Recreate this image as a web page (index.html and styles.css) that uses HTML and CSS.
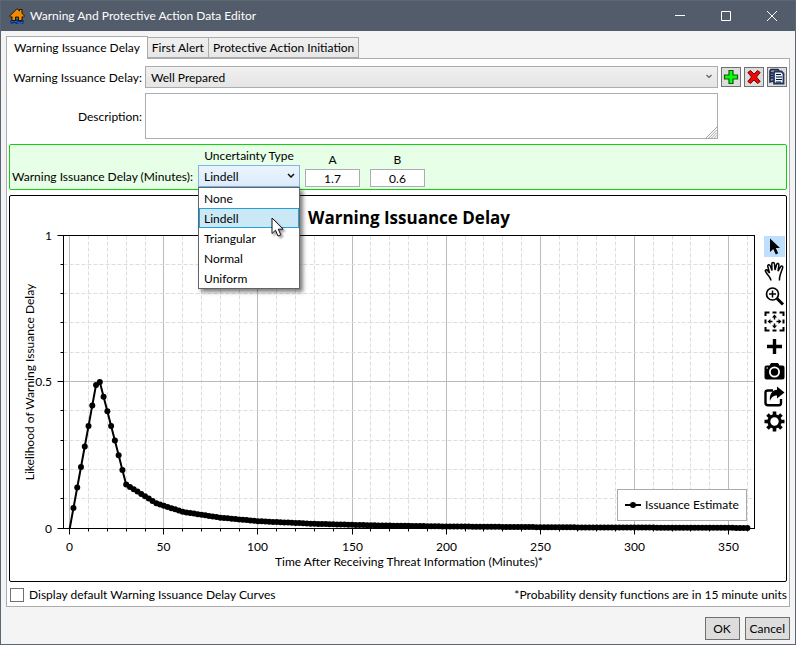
FILE: index.html
```html
<!DOCTYPE html>
<html lang="en">
<head>
<meta charset="utf-8">
<title>Warning And Protective Action Data Editor</title>
<link rel="stylesheet" href="styles.css">
</head>
<body>
<div class="window">
  <header class="titlebar">
    <svg class="app-icon" viewBox="0 0 16 16" aria-hidden="true">
      <path d="M1 13 L4 11.500 L13 11.500 L15 13 L14 16 L11 15 L8 16 L5 15 L2 16 Z" fill="#0a2f7a"/>
      <path d="M2 14 Q5 12 8 14 T14 14" stroke="#1668d8" fill="none"/>
      <path d="M8 .7 L10.500 3 V1.500 H13 V5.300 L15.500 8 L14 9.500 L13 8.700 V12.500 H9.500 V9 H6.500 V12.500 H3 V8.700 L2 9.500 L.7 8 Z" fill="#f28a00" stroke="#1c1308" stroke-width="1"/>
    </svg>
    <h1 class="title">Warning And Protective Action Data Editor</h1>
    <div class="caption-buttons">
      <button type="button" aria-label="Minimize"><svg viewBox="0 0 12 12"><path d="M1 5.500H11"/></svg></button>
      <button type="button" aria-label="Maximize"><svg viewBox="0 0 12 12"><path d="M1.500 1.500H10.500V10.500H1.500Z"/></svg></button>
      <button type="button" aria-label="Close"><svg viewBox="0 0 12 12"><path d="M1 1L11 11M11 1L1 11"/></svg></button>
    </div>
  </header>

  <main class="content">
    <div class="tabs" role="tablist">
      <button class="tab tab-active" type="button" role="tab" aria-selected="true">Warning Issuance Delay</button>
      <button class="tab" type="button" role="tab" aria-selected="false">First Alert</button>
      <button class="tab" type="button" role="tab" aria-selected="false">Protective Action Initiation</button>
    </div>

    <section class="panel" role="tabpanel">
      <div class="form">
        <label for="delay">Warning Issuance Delay:</label>
        <div class="combo">
          <select id="delay" class="combo-select"><option>Well Prepared</option></select>
          <svg class="chevron chevron-soft" viewBox="0 0 8 5" aria-hidden="true"><path d="M1.500 1L4 3.500L6.500 1"/></svg>
        </div>
        <div class="actions">
          <button class="icon-button" type="button" aria-label="Add"><svg viewBox="0 0 18 18"><path d="M7 2.500H11V7H15.500V11H11V15.500H7V11H2.500V7H7Z" fill="#0aff0a" stroke="#0b5c0b" stroke-width="1.200"/></svg></button>
          <button class="icon-button" type="button" aria-label="Delete"><svg viewBox="0 0 18 18"><path d="M5.500 2.500L9 6L12.500 2.500L15.200 4.500L11.500 9L15.200 13.500L12.500 15.500L9 12L5.500 15.500L2.800 13.500L6.500 9L2.800 4.500Z" fill="#f40505" stroke="#6d0808"/></svg></button>
          <button class="icon-button" type="button" aria-label="Copy"><svg viewBox="0 0 18 18"><path d="M3 1.500H10L11 3V13H5L2 14V3Z" fill="#8c9bb8" stroke="#1c2948" stroke-width="1.600"/><path d="M2.500 5H5M2.500 7.500H5M2.500 10H5" stroke="#111a30" stroke-width="1.300"/><path d="M7 3.500H13.500L15.500 5.500V15.500H6V4.500Z" fill="#e9f0ff" stroke="#23365f" stroke-width="1.800"/><path d="M8 6.500H13M8 9H14M8 11.500H14M8 14H13" stroke="#0d1222" stroke-width="1.200"/></svg></button>
        </div>
        <label for="description">Description:</label>
        <div class="description">
          <textarea id="description"></textarea>
          <svg class="grip" viewBox="0 0 12 12" aria-hidden="true"><path d="M0 12L12 0M3 12L12 3M6 12L12 6M9 12L12 9"/></svg>
        </div>
      </div>

      <div class="uncertainty">
        <label class="uncertainty-label" for="type">Warning Issuance Delay (Minutes):</label>
        <div class="type-field">
          <span class="column-title">Uncertainty Type</span>
          <div class="combo combo-open">
            <select id="type" class="combo-select">
              <option>None</option>
              <option selected>Lindell</option>
              <option>Triangular</option>
              <option>Normal</option>
              <option>Uniform</option>
            </select>
            <svg class="chevron" viewBox="0 0 8 5" aria-hidden="true"><path d="M1 1L4 4L7 1"/></svg>
            <ul class="menu" role="listbox" aria-label="Uncertainty Type">
              <li role="option">None</li>
              <li role="option" class="menu-selected" aria-selected="true">Lindell</li>
              <li role="option">Triangular</li>
              <li role="option">Normal</li>
              <li role="option">Uniform</li>
            </ul>
            <svg class="pointer" viewBox="0 0 14 20" aria-hidden="true"><path d="M1 1V16.500L4.500 13.200L7 19L9.800 17.800L7.300 12.200H12Z"/></svg>
          </div>
        </div>
        <div class="number-field">
          <label for="a">A</label>
          <input id="a" type="text" value="1.7">
        </div>
        <div class="number-field">
          <label for="b">B</label>
          <input id="b" type="text" value="0.6">
        </div>
      </div>

      <div class="plot">
        <svg id="chart" class="chart" viewBox="10 196 750 385" role="img" aria-label="Warning Issuance Delay"></svg>
        <div class="tools">
          <button class="tool tool-active" type="button" aria-label="Select"><svg viewBox="0 0 21 21"><path d="M6 2.500V16L9.300 13L11.800 18.500L14.200 17.300L11.800 12H16Z" fill="#000"/></svg></button>
          <button class="tool" type="button" aria-label="Pan"><svg viewBox="0 0 21 21"><path d="M7 19.500C6.500 16.500 5 15.500 3.500 13.500L1.500 10.500C.8 9 2.600 8.300 3.600 9.500L5.500 12L3.800 5.500C3.300 3.500 5.500 3 6.200 4.800L8 9.500L7.800 3C7.800 1 10.300 1 10.500 3L11 9L12.600 3.500C13.200 1.600 15.200 2.300 14.900 4.200L14 10L16.500 5.800C17.500 4.300 19.300 5.300 18.600 7L16.500 13C15.800 15.500 15 17 15.500 19.500" fill="none" stroke="#000" stroke-width="1.500"/></svg></button>
          <button class="tool" type="button" aria-label="Zoom"><svg viewBox="0 0 21 21"><circle cx="8.500" cy="8" r="6" fill="none" stroke="#000" stroke-width="1.700"/><path d="M8.500 4.500V11.500M5 8H12" stroke="#000" stroke-width="1.500"/><path d="M13 12.500L19 18.500" stroke="#000" stroke-width="3"/></svg></button>
          <button class="tool" type="button" aria-label="Zoom to fit"><svg viewBox="0 0 21 21"><path d="M1.500 5V1.500H5.500M8.500 1.500H12.500M15.500 1.500H19.500V5M19.500 8.500V12.500M19.500 16V19.500H15.500M12.500 19.500H8.500M5.500 19.500H1.500V16M1.500 12.500V8.500" fill="none" stroke="#000" stroke-width="2"/><path d="M10.500 5V8.500M10.500 12.500V16M5 10.500H8.500M12.500 10.500H16" stroke="#000" stroke-width="1.500"/><path d="M10.500 3.500L13 6.500H8ZM10.500 17.500L8 14.500H13ZM3.500 10.500L6.500 8V13ZM17.500 10.500L14.500 13V8Z"/></svg></button>
          <button class="tool" type="button" aria-label="Add"><svg viewBox="0 0 21 21"><path d="M10.500 3V18M3 10.500H18" stroke="#000" stroke-width="3.400"/></svg></button>
          <button class="tool" type="button" aria-label="Snapshot"><svg viewBox="0 0 21 21"><path d="M.5 6.500Q.5 4.500 2.500 4.500H5.500L7 2H14L15.500 4.500H18.500Q20.500 4.500 20.500 6.500V16.500Q20.500 18.500 18.500 18.500H2.500Q.5 18.500 .5 16.500Z"/><circle cx="10.500" cy="11" r="4.600" fill="#000" stroke="#fff" stroke-width="1.800"/><path d="M2.500 7H4" stroke="#fff" stroke-width="1.200"/></svg></button>
          <button class="tool" type="button" aria-label="Export"><svg viewBox="0 0 21 21"><path d="M9 4.500H4Q1.500 4.500 1.500 6.500V17Q1.500 19.200 4 19.200H15Q17 19.200 17 17V13" fill="none" stroke="#000" stroke-width="2.400"/><path d="M13 .5L20.500 6.500L13 12.500V9.500C9.500 9.500 7.500 11 6 15C5 9 8 4 13 3.700Z"/></svg></button>
          <button class="tool" type="button" aria-label="Settings"><svg viewBox="0 0 21 21"><circle cx="10.500" cy="10.500" r="5.700" fill="none" stroke="#000" stroke-width="3"/><path d="M10.500 .5V4M10.500 17V20.500M.5 10.500H4M17 10.500H20.500M3.500 3.500L6 6M15 15L17.500 17.500M3.500 17.500L6 15M15 6L17.500 3.500" stroke="#000" stroke-width="3.600"/></svg></button>
        </div>
      </div>

      <div class="notes">
        <label class="check"><input type="checkbox"> Display default Warning Issuance Delay Curves</label>
        <span>*Probability density functions are in 15 minute units</span>
      </div>
    </section>

    <footer class="dialog-actions">
      <button class="push" type="button">OK</button>
      <button class="push" type="button">Cancel</button>
    </footer>
  </main>
</div>
<script src="chart.js"></script>
</body>
</html>
```
FILE: styles.css
```css
* { box-sizing: border-box; }

body {
  margin: 0;
  font: 12px/16px Lato, "Open Sans", sans-serif;
  color: #000;
}

button, input, select, textarea { font: inherit; color: inherit; border-radius: 0; }
svg { display: block; }

.window {
  min-height: 100vh;
  display: flex;
  flex-direction: column;
  border: 1px solid #5b6675;
  background: #f4f4f4;
}

.titlebar {
  display: flex;
  align-items: center;
  height: 30px;
  padding-left: 8px;
  background: #525c6a;
  color: #fff;
}
.app-icon { width: 16px; height: 16px; margin-right: 5px; }
.title { flex: 1; margin: 0; font-size: 12px; font-weight: 400; }
.caption-buttons { display: flex; }
.caption-buttons button {
  display: flex;
  align-items: center;
  justify-content: center;
  width: 46px;
  height: 30px;
  padding: 0;
  border: 0;
  background: none;
}
.caption-buttons svg { width: 12px; height: 12px; fill: none; stroke: #fff; }

.content { flex: 1; padding: 5px 5px 0; }

.tabs { display: flex; align-items: flex-end; position: relative; }
.tab {
  height: 21px;
  margin-left: -1px;
  padding: 1px 4px 0;
  border: 1px solid #acacac;
  background: linear-gradient(#f0f0f0, #e6e6e6);
  white-space: nowrap;
}
.tab-active {
  height: 23px;
  margin: 0 0 -1px;
  padding: 0 7px;
  border-bottom: 0;
  background: #fff;
}

.panel { border: 1px solid #acacac; background: #fff; padding: 7px 2px 2px; }

.form {
  display: grid;
  grid-template-columns: 133px 1fr auto;
  column-gap: 3px;
  row-gap: 5px;
  align-items: center;
}
.form > label { padding-top: 2px; text-align: right; white-space: nowrap; }
.actions { display: flex; gap: 3px; }
.icon-button {
  width: 20px;
  height: 20px;
  padding: 0;
  border: 1px solid #707070;
  background: #ddd;
}
.icon-button svg { width: 18px; height: 18px; }

.combo { position: relative; }
.combo-select {
  display: block;
  appearance: none;
  width: 100%;
  height: 22px;
  padding: 2px 5px 0;
  border: 1px solid #acacac;
  background: linear-gradient(#f0f0f0, #e5e5e5);
}
.combo-open .combo-select { border-color: #7eb4ea; background: linear-gradient(#ebf4fc, #dcecfc); }
.chevron {
  position: absolute;
  right: 5px;
  top: 8px;
  width: 8px;
  height: 5px;
  fill: none;
  stroke: #111;
  stroke-width: 1.500;
}
.chevron-soft { stroke: #606060; stroke-width: 1.200; }

.description { position: relative; }
.description textarea {
  display: block;
  width: 100%;
  height: 46px;
  border: 1px solid #abadb3;
  resize: none;
}
.grip { position: absolute; right: 1px; bottom: 1px; width: 11px; height: 11px; fill: none; stroke: #999; }

.uncertainty {
  display: flex;
  align-items: flex-end;
  height: 46px;
  margin-top: 5px;
  padding: 0 2px 2px;
  border: 1px solid #10d010;
  border-radius: 2px;
  background: #e6ffe6;
}
.uncertainty-label { width: 186px; padding-bottom: 2px; white-space: nowrap; }
.type-field { width: 102px; }
.column-title { display: block; margin-bottom: 1px; text-align: center; white-space: nowrap; }
.number-field { width: 55px; margin-left: 5px; text-align: center; }
.number-field + .number-field { margin-left: 10px; }
.number-field label { display: block; margin-bottom: 1px; }
.number-field input {
  display: block;
  width: 100%;
  height: 18px;
  padding: 0;
  border: 1px solid #abadb3;
  background: #fff;
  text-align: center;
}

.menu {
  position: absolute;
  z-index: 2;
  top: 22px;
  left: 0;
  right: 0;
  margin: 0;
  padding: 0;
  border: 1px solid #646464;
  background: #fff;
  box-shadow: 3px 3px 4px rgba(0, 0, 0, .5);
  list-style: none;
}
.menu li { height: 20px; padding: 2px 4px 0; border: 1px solid transparent; }
.menu .menu-selected { border-color: #26a0da; background: #cbe8f6; }
.pointer {
  position: absolute;
  z-index: 3;
  left: 73px;
  top: 52px;
  width: 14px;
  height: 20px;
  fill: #fff;
  stroke: #111;
  filter: drop-shadow(2px 2px 1px rgba(0, 0, 0, .4));
}

.plot {
  display: flex;
  margin-top: 5px;
  border: 1px solid #000;
  border-radius: 2px;
}
.chart { flex: 1; min-width: 0; }
.tools { display: flex; flex-direction: column; gap: 4px; margin: 40px 1px 0 4px; }
.tool { width: 21px; height: 21px; padding: 0; border: 0; background: none; }
.tool svg { width: 21px; height: 21px; }
.tool-active { background: #bfdfff; }

.frame, .tick, .curve { fill: none; stroke: #000; }
.curve { stroke-width: 2; }
.major { stroke: #bbb; }
.minor { stroke: #ddd; stroke-dasharray: 4 2; }
.legend-box { fill: #fff; stroke: #aaa; }
.axis-text { font-size: 12px; }
.axis-text-mid { text-anchor: middle; }
.axis-text-end { text-anchor: end; }
.chart-title { font-family: "Open Sans", sans-serif; font-size: 17px; font-weight: 700; text-anchor: middle; }

.notes { display: flex; justify-content: space-between; margin-top: 4px; height: 18px; align-items: center; }
.check { display: flex; align-items: center; gap: 5px; }
.check input {
  appearance: none;
  width: 14px;
  height: 14px;
  margin: 0 0 0 1px;
  border: 1px solid #707070;
  background: #fff;
}

.dialog-actions { display: flex; justify-content: flex-end; gap: 5px; margin-top: 10px; }
.push { height: 23px; min-width: 35px; padding: 0 4px; border: 1px solid #707070; background: #ddd; }
```
FILE: chart.js
```js
const svg = document.getElementById('chart');
const left = 63.5, right = 754.5, top0 = 235.5, bottom = 528.5;
const px = t => 69.7 + t * 1.8825;
const py = v => bottom - v * (bottom - top0);
const snap = n => Math.floor(n) + 0.5;

function add(name, attrs, text) {
  const el = document.createElementNS('http://www.w3.org/2000/svg', name);
  for (const key in attrs) el.setAttribute(key, attrs[key]);
  if (text) el.textContent = text;
  svg.appendChild(el);
}
const line = (cls, x1, y1, x2, y2) => add('line', { class: cls, x1, y1, x2, y2 });

// Grid lines and axis ticks
for (let t = 0; t <= 360; t += 10) {
  const major = t % 50 === 0, x = snap(px(t));
  line(major ? 'major' : 'minor', x, top0, x, bottom);
  line('tick', x, bottom, x, bottom + (major ? 6 : 3));
  if (major) add('text', { class: 'axis-text axis-text-mid', x, y: 551 }, String(t));
}
for (let i = 0; i <= 10; i++) {
  const major = i % 5 === 0, y = snap(py(i / 10) - 0.5);
  line(major ? 'major' : 'minor', left, y, right, y);
  line('tick', left - (major ? 6 : 3), y, left, y);
  if (major) add('text', { class: 'axis-text axis-text-end', x: 52, y: y + 4 }, String(i / 10));
}
add('rect', { class: 'frame', x: left, y: top0, width: right - left, height: bottom - top0 });

// Legend
add('rect', { class: 'legend-box', x: 617.5, y: 489.5, width: 129, height: 31 });
line('curve', 625, 505, 641, 505);
add('circle', { cx: 633, cy: 505, r: 3 });
add('text', { class: 'axis-text', x: 645, y: 509 }, 'Issuance Estimate');

// Likelihood at the given minutes, linear in between, one marker every two minutes
const knots = [[0, 0], [14, 0.49], [16, 0.5], [30, 0.15], [46, 0.086], [60, 0.057],
  [80, 0.037], [100, 0.025], [130, 0.016], [160, 0.011], [200, 0.007], [260, 0.004], [360, 0.002]];
function likelihood(t) {
  const k = knots.findIndex(p => p[0] >= t);
  if (k <= 0) return knots[0][1];
  const [t0, v0] = knots[k - 1], [t1, v1] = knots[k];
  return v0 + (v1 - v0) * (t - t0) / (t1 - t0);
}
const points = [];
for (let t = 0; t <= 360; t += 2) points.push([px(t), py(likelihood(t))]);
add('polyline', { class: 'curve', points: points.join(' ') });
points.slice(1).forEach(([cx, cy]) => add('circle', { cx, cy, r: 3 }));

// Titles
add('text', { class: 'chart-title', x: 409, y: 224 }, 'Warning Issuance Delay');
add('text', { class: 'axis-text axis-text-mid', x: 409, y: 566 }, 'Time After Receiving Threat Information (Minutes)*');
add('text', { class: 'axis-text axis-text-mid', transform: 'translate(34 382) rotate(-90)' }, 'Likelihood of Warning Issuance Delay');
```
